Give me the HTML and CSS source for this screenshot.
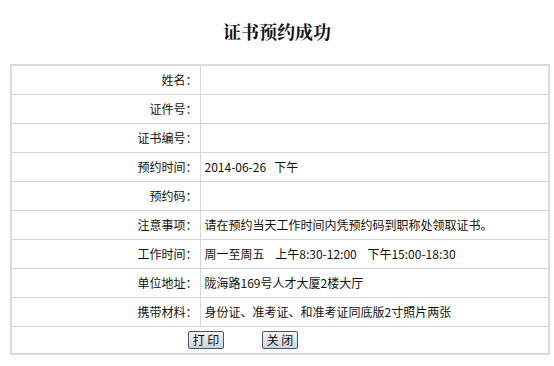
FILE: index.html
```html
<!DOCTYPE html>
<html lang="zh-CN">
<head>
<meta charset="utf-8">
<title>证书预约成功</title>
<link rel="stylesheet" href="styles.css">
</head>
<body>
<h1 class="title">证书预约成功</h1>
<table class="info">
  <tr><th>姓名：</th><td></td></tr>
  <tr><th>证件号：</th><td></td></tr>
  <tr><th>证书编号：</th><td></td></tr>
  <tr><th>预约时间：</th><td>2014-06-26&nbsp;&nbsp;&nbsp;下午</td></tr>
  <tr><th>预约码：</th><td></td></tr>
  <tr><th>注意事项：</th><td>请在预约当天工作时间内凭预约码到职称处领取证书。</td></tr>
  <tr><th>工作时间：</th><td>周一至周五&nbsp;&nbsp;&nbsp;&nbsp;上午8:30-12:00&nbsp;&nbsp;&nbsp;&nbsp;下午15:00-18:30</td></tr>
  <tr><th>单位地址：</th><td>陇海路169号人才大厦2楼大厅</td></tr>
  <tr><th>携带材料：</th><td>身份证、准考证、和准考证同底版2寸照片两张</td></tr>
  <tr class="actions"><td colspan="2"><button class="btn" type="button">打 印</button><button class="btn" type="button">关 闭</button></td></tr>
</table>
</body>
</html>
```

FILE: styles.css
```css
html, body {
  margin: 0;
  padding: 0;
  background: #fff;
}
body {
  font-family: "Noto Sans CJK SC", "DejaVu Sans", sans-serif;
  font-size: 12px;
  color: #111;
}
.title {
  margin: 0;
  padding-top: 21px;
  height: 64px;
  box-sizing: border-box;
  text-align: center;
  font-family: "Noto Serif CJK SC", "Noto Sans CJK SC", serif;
  font-size: 18px;
  line-height: 20px;
  font-weight: bold;
  color: #111;
}
.info {
  margin: 0 0 0 10px;
  width: 540px;
  border-collapse: collapse;
  border: 2px solid #dcdcdc;
}
.info th, .info td {
  border: 1px solid #d6d6d6;
  height: 29px;
  padding: 0;
  box-sizing: border-box;
  vertical-align: middle;
  line-height: 16px;
}
.info th {
  width: 189px;
  text-align: right;
  font-weight: normal;
  padding-right: 2px;
}
.info td {
  text-align: left;
  padding-left: 4px;
}
.actions td {
  height: 28px;
  padding-left: 0;
  text-align: left;
}
.btn {
  font-family: "Noto Sans CJK SC", sans-serif;
  font-size: 12px;
  line-height: 14px;
  height: 18px;
  width: 36px;
  padding: 0;
  margin: 0;
  color: #111;
  border: 1px solid #4a5560;
  border-radius: 2px;
  background: linear-gradient(#f2f5f8, #c9d3dd);
}
.btn:first-child {
  margin-left: 176px;
}
.btn + .btn {
  margin-left: 38px;
}
```
